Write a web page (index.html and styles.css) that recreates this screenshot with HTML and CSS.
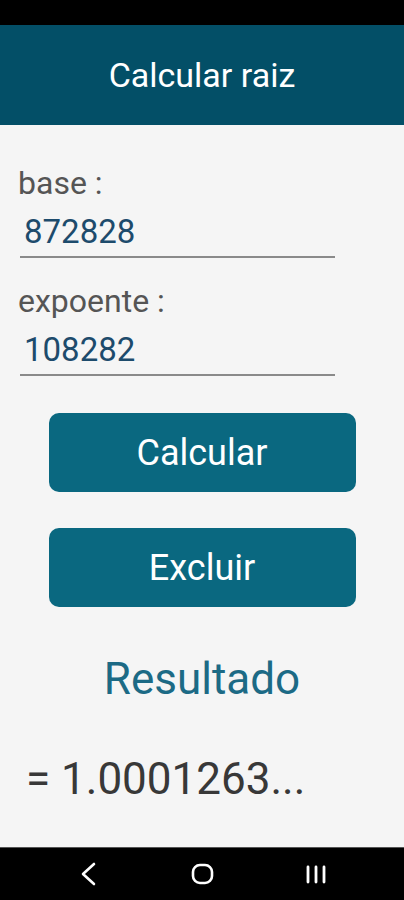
FILE: index.html
```html
<!DOCTYPE html>
<html lang="pt">
<head>
    <meta charset="UTF-8">
    <meta name="viewport" content="width=device-width, initial-scale=1.0">
    <title>Calcular raiz</title>
    <link rel="stylesheet" href="styles.css">
</head>
<body>
    <div class="screen">
        <div class="status-bar"></div>

        <header class="app-bar">
            <h1>Calcular raiz</h1>
        </header>

        <main class="content">
            <label class="field-label" for="base">base :</label>
            <input class="field" type="text" id="base" value="872828">

            <label class="field-label second" for="expoente">expoente :</label>
            <input class="field" type="text" id="expoente" value="108282">

            <button class="btn first" onclick="calcular()">Calcular</button>
            <button class="btn" onclick="excluir()">Excluir</button>

            <p class="result-title">Resultado</p>
            <p class="result" id="result">= 1.0001263...</p>
        </main>

        <nav class="nav-bar">
            <svg width="24" height="24" viewBox="0 0 24 24">
                <polyline points="18,2 7,12 18,22" fill="none" stroke="#fff" stroke-width="2.6" stroke-linecap="round" stroke-linejoin="round"/>
            </svg>
            <svg width="24" height="24" viewBox="0 0 24 24">
                <rect x="3" y="3" width="19" height="18" rx="7" fill="none" stroke="#fff" stroke-width="2.6"/>
            </svg>
            <svg width="24" height="24" viewBox="0 0 24 24">
                <path d="M4 5v15M12 5v15M20 5v15" stroke="#fff" stroke-width="2.8" stroke-linecap="round"/>
            </svg>
        </nav>
    </div>

    <script>
        function calcular() {
            let base = parseFloat(document.getElementById('base').value);
            let expoente = parseFloat(document.getElementById('expoente').value);

            if (isNaN(base) || isNaN(expoente) || expoente === 0) {
                document.getElementById('result').textContent = '= ?';
                return;
            }

            let raiz = Math.pow(base, 1 / expoente);
            document.getElementById('result').textContent = '= ' + raiz.toFixed(7) + '...';
        }

        function excluir() {
            document.getElementById('base').value = '';
            document.getElementById('expoente').value = '';
            document.getElementById('result').textContent = '';
        }
    </script>
</body>
</html>
```

FILE: styles.css
```css
body {
    margin: 0;
    font-family: Roboto, 'Noto Sans', sans-serif;
    background: #000;
}
.screen {
    width: 404px;
    height: 900px;
    display: flex;
    flex-direction: column;
    background-color: #f5f5f5;
}
.status-bar {
    height: 25px;
    background: #000;
}
.app-bar {
    height: 100px;
    display: flex;
    align-items: center;
    justify-content: center;
    background-color: #034f67;
}
.app-bar h1 {
    margin: 0;
    font-size: 34px;
    font-weight: 400;
    color: #fff;
}
.content {
    flex: 1;
    display: flex;
    flex-direction: column;
    padding: 40px 0 0 18px;
}
.field-label {
    font-size: 32px;
    line-height: 36px;
    color: #555;
}
.field-label.second {
    margin-top: 25px;
}
.field {
    width: 315px;
    height: 47px;
    box-sizing: border-box;
    margin: 10px 0 0 2px;
    padding: 0 4px 5px;
    border: none;
    border-bottom: 2px solid #8a8a8a;
    background: transparent;
    font-family: inherit;
    font-size: 33px;
    line-height: 40px;
    color: #1d4b6c;
    outline: none;
}
.btn {
    align-self: center;
    width: 307px;
    height: 79px;
    margin: 36px 18px 0 0;
    border: none;
    border-radius: 10px;
    background-color: #0a6880;
    color: #fff;
    font-family: inherit;
    font-size: 36px;
    cursor: pointer;
}
.btn.first {
    margin-top: 37px;
}
.result-title {
    margin: 47px 18px 0 0;
    text-align: center;
    font-size: 44px;
    line-height: 50px;
    color: #1c6a85;
}
.result {
    margin: 50px 0 0 8px;
    font-size: 44px;
    line-height: 50px;
    color: #383838;
}
.nav-bar {
    height: 53px;
    display: flex;
    align-items: center;
    justify-content: center;
    gap: 90px;
    background: #000;
    border-top: 1px solid #555;
    box-sizing: border-box;
}
```
